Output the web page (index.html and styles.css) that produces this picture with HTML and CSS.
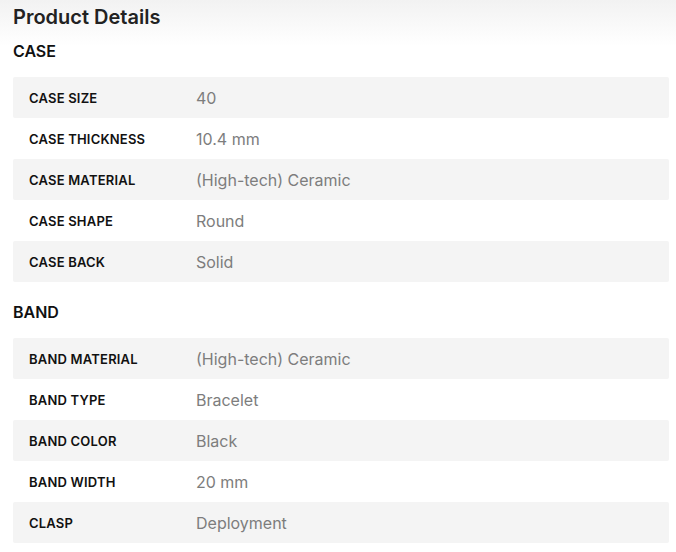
FILE: index.html
```html
<!DOCTYPE html>
<html lang="en">
<head>
<meta charset="utf-8">
<title>Product Details</title>
<link rel="stylesheet" href="styles.css">
</head>
<body>
<div class="page">
  <h1 class="title">Product Details</h1>
  <section class="group">
    <h2 class="group-title">CASE</h2>
    <div class="specs">
      <div class="row"><div class="label">CASE SIZE</div><div class="value">40</div></div>
      <div class="row"><div class="label">CASE THICKNESS</div><div class="value">10.4 mm</div></div>
      <div class="row"><div class="label">CASE MATERIAL</div><div class="value">(High-tech) Ceramic</div></div>
      <div class="row"><div class="label">CASE SHAPE</div><div class="value">Round</div></div>
      <div class="row"><div class="label">CASE BACK</div><div class="value">Solid</div></div>
    </div>
  </section>
  <section class="group">
    <h2 class="group-title">BAND</h2>
    <div class="specs">
      <div class="row"><div class="label">BAND MATERIAL</div><div class="value">(High-tech) Ceramic</div></div>
      <div class="row"><div class="label">BAND TYPE</div><div class="value">Bracelet</div></div>
      <div class="row"><div class="label">BAND COLOR</div><div class="value">Black</div></div>
      <div class="row"><div class="label">BAND WIDTH</div><div class="value">20 mm</div></div>
      <div class="row"><div class="label">CLASP</div><div class="value">Deployment</div></div>
    </div>
  </section>
</div>
</body>
</html>
```
FILE: styles.css
```css
html, body {
  margin: 0;
  padding: 0;
}
body {
  background: #fff linear-gradient(to bottom, #f2f2f2 0, #fff 46px) no-repeat;
  font-family: Inter, "Noto Sans", sans-serif;
  color: #222;
}
.page {
  padding: 6px 7px 0 13px;
}
.title {
  margin: 0 0 13px;
  font-size: 20px;
  line-height: 22px;
  font-weight: 600;
  color: #222;
}
.group + .group {
  margin-top: 20px;
}
.group-title {
  margin: 0 0 16px;
  font-size: 16px;
  line-height: 20px;
  font-weight: 600;
  color: #111;
}
.specs {
  display: flex;
  flex-direction: column;
}
.row {
  display: grid;
  grid-template-columns: 167px 1fr;
  align-items: center;
  height: 41px;
  padding-left: 16px;
  border-radius: 2px;
}
.row:nth-child(odd) {
  background: #f4f4f4;
}
.label {
  font-size: 13px;
  font-weight: 600;
  letter-spacing: 0.2px;
  color: #111;
}
.value {
  font-size: 16px;
  color: #7d7d7d;
}
```
